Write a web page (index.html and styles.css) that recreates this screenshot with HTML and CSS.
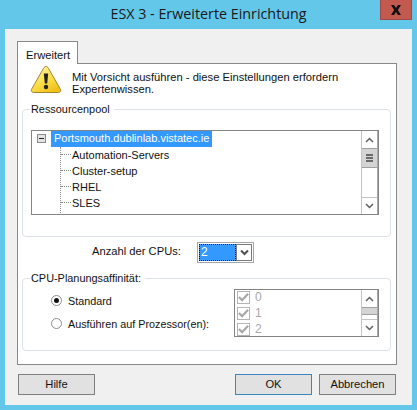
FILE: index.html
```html
<!DOCTYPE html>
<html lang="de">
<head>
    <meta charset="UTF-8">
    <title>ESX 3 - Erweiterte Einrichtung</title>
    <link rel="stylesheet" href="styles.css">
</head>
<body>
    <div class="window">
        <div class="titlebar">
            <span class="title">ESX 3 - Erweiterte Einrichtung</span>
            <div class="close">
                <svg width="12" height="10" viewBox="0 0 12 10"><path d="M1 0h3l2 3 2-3h3L7.8 5 11 10H8L6 7l-2 3H1l3.200-5z" fill="#111"/></svg>
            </div>
        </div>
        <div class="client">
            <div class="tab">Erweitert</div>
            <div class="panel">
                <div class="warning">
                    <svg class="warn-icon" width="32" height="29" viewBox="0 0 32 29">
                        <defs>
                            <linearGradient id="warnfill" x1="0" y1="0" x2="0.6" y2="1">
                                <stop offset="0" stop-color="#fff6b0"/>
                                <stop offset="0.6" stop-color="#fbe04a"/>
                                <stop offset="1" stop-color="#f2c21c"/>
                            </linearGradient>
                        </defs>
                        <path d="M16 1.500c1 0 1.800.6 2.400 1.700l12 21c.8 1.500 0 3.300-1.900 3.300H3.500c-1.900 0-2.700-1.800-1.900-3.300l12-21C14.200 2.100 15 1.500 16 1.500z" fill="url(#warnfill)" stroke="#a5843a"/>
                        <path d="M13.800 8.500h4.400l-1 10h-2.400z" fill="#222"/>
                        <circle cx="16" cy="22" r="2.200" fill="#222"/>
                    </svg>
                    <p class="warning-text">Mit Vorsicht ausführen - diese Einstellungen erfordern Expertenwissen.</p>
                </div>

                <fieldset class="group group-pool">
                    <legend>Ressourcenpool</legend>
                    <div class="listbox tree-box">
                        <div class="tree">
                            <div class="tree-root">
                                <span class="expander"></span>
                                <span class="selected">Portsmouth.dublinlab.vistatec.ie</span>
                            </div>
                            <ul class="tree-children">
                                <li>Automation-Servers</li>
                                <li>Cluster-setup</li>
                                <li>RHEL</li>
                                <li>SLES</li>
                            </ul>
                        </div>
                        <div class="scrollbar">
                            <div class="sb-btn">
                                <svg width="9" height="6" viewBox="0 0 9 6"><path d="M1 5l3.500-3.500L8 5" fill="none" stroke="#606060" stroke-width="1.500"/></svg>
                            </div>
                            <div class="sb-thumb">
                                <span></span><span></span><span></span>
                            </div>
                            <div class="sb-track"></div>
                            <div class="sb-btn">
                                <svg width="9" height="6" viewBox="0 0 9 6"><path d="M1 1l3.500 3.500L8 1" fill="none" stroke="#606060" stroke-width="1.500"/></svg>
                            </div>
                        </div>
                    </div>
                </fieldset>

                <div class="cpu-row">
                    <label class="cpu-label">Anzahl der CPUs:</label>
                    <div class="combo">
                        <div class="combo-value"><span>2</span></div>
                        <div class="combo-arrow">
                            <svg width="9" height="7" viewBox="0 0 9 7"><path d="M1 1.500l3.500 3.500L8 1.500" fill="none" stroke="#505050" stroke-width="2"/></svg>
                        </div>
                    </div>
                </div>

                <fieldset class="group group-cpu">
                    <legend>CPU-Planungsaffinität:</legend>
                    <div class="affinity">
                        <div class="radios">
                            <div class="radio-row">
                                <span class="radio checked"></span>
                                <span>Standard</span>
                            </div>
                            <div class="radio-row">
                                <span class="radio"></span>
                                <span>Ausführen auf Prozessor(en):</span>
                            </div>
                        </div>
                        <div class="listbox cpu-list">
                            <ul class="checks">
                                <li><span class="check"><svg width="12" height="10" viewBox="0 0 12 10"><path d="M1 5l3.500 3.500L11 1.500" fill="none" stroke="#a8a8a8" stroke-width="2.500"/></svg></span>0</li>
                                <li><span class="check"><svg width="12" height="10" viewBox="0 0 12 10"><path d="M1 5l3.500 3.500L11 1.500" fill="none" stroke="#a8a8a8" stroke-width="2.500"/></svg></span>1</li>
                                <li><span class="check"><svg width="12" height="10" viewBox="0 0 12 10"><path d="M1 5l3.500 3.500L11 1.500" fill="none" stroke="#a8a8a8" stroke-width="2.500"/></svg></span>2</li>
                            </ul>
                            <div class="scrollbar">
                                <div class="sb-btn">
                                    <svg width="9" height="6" viewBox="0 0 9 6"><path d="M1 5l3.500-3.500L8 5" fill="none" stroke="#606060" stroke-width="1.500"/></svg>
                                </div>
                                <div class="sb-thumb small"></div>
                                <div class="sb-track"></div>
                                <div class="sb-btn">
                                    <svg width="9" height="6" viewBox="0 0 9 6"><path d="M1 1l3.500 3.500L8 1" fill="none" stroke="#606060" stroke-width="1.500"/></svg>
                                </div>
                            </div>
                        </div>
                    </div>
                </fieldset>
            </div>
            <div class="buttons">
                <div class="btn">Hilfe</div>
                <div class="btn-right">
                    <div class="btn default">OK</div>
                    <div class="btn">Abbrechen</div>
                </div>
            </div>
        </div>
    </div>
</body>
</html>
```

FILE: styles.css
```css
html, body {
    margin: 0;
    padding: 0;
}
body {
    width: 417px;
    height: 410px;
    overflow: hidden;
    background-color: #63c7ea;
    font-family: "Liberation Sans", Arial, sans-serif;
    font-size: 11.200px;
    color: #111;
}
ul {
    list-style: none;
    margin: 0;
    padding: 0;
}

/* title bar */
.window {
    position: relative;
    height: 410px;
    display: flex;
    flex-direction: column;
}
.titlebar {
    height: 29px;
    display: flex;
    align-items: center;
    justify-content: center;
}
.title {
    font-family: "Open Sans", sans-serif;
    font-size: 14.300px;
    color: #1a1a1a;
    margin-top: -2px;
}
.close {
    position: absolute;
    top: 0;
    right: 5px;
    width: 32px;
    height: 20px;
    box-sizing: border-box;
    border: 1px solid #9c4a43;
    border-top: 0;
    background-color: #c35a50;
    display: flex;
    align-items: center;
    justify-content: center;
}

/* dialog body */
.client {
    height: 376px;
    margin: 0 5px;
    box-sizing: border-box;
    padding: 12px 15px 0 12px;
    background-color: #f0f0f0;
}
.tab {
    width: 61px;
    height: 23px;
    box-sizing: border-box;
    border: 1px solid #898989;
    border-bottom: 0;
    background-color: #fff;
    padding: 6px 0 0 8px;
    line-height: 14px;
    margin-bottom: -1px;
    position: relative;
}
.panel {
    height: 302px;
    box-sizing: border-box;
    border: 1px solid #898989;
    background-color: #fff;
    padding: 1px 5px 0 4px;
}
.warning {
    display: flex;
    height: 33px;
}
.warn-icon {
    margin-left: 8px;
    flex: none;
}
.warning-text {
    margin: 6px 0 0 10px;
    width: 285px;
    line-height: 12px;
}

/* group boxes */
.group {
    margin: 0;
    padding: 0;
    border: 1px solid #dce2e8;
    border-radius: 4px;
    min-width: 0;
}
.group legend {
    margin-left: -1px;
    padding: 0 4px 0 1px;
    line-height: 14px;
    font-size: 10.900px;
}
.group-pool {
    margin-top: 4px;
    height: 135px;
    box-sizing: border-box;
    padding: 14px 11px 0 8px;
}
.group-cpu {
    height: 80px;
    box-sizing: border-box;
    padding: 2px 11px 0 8px;
}

/* list boxes and scrollbars */
.listbox {
    display: flex;
    border: 1px solid #848484;
    background-color: #fff;
    box-sizing: border-box;
}
.tree-box {
    height: 85px;
}
.tree {
    flex: 1;
    padding-left: 5px;
    overflow: hidden;
    font-size: 11px;
}
.tree-root {
    display: flex;
    align-items: center;
    height: 17px;
    margin-top: -1px;
}
.expander {
    position: relative;
    width: 7px;
    height: 7px;
    border: 1px solid #8a8a8a;
    background-color: #e4e4e4;
    margin-right: 5px;
}
.expander::after {
    content: "";
    position: absolute;
    left: 1px;
    right: 1px;
    top: 3px;
    height: 1px;
    background-color: #222;
}
.selected {
    background-color: #3399ff;
    color: #fff;
    height: 17px;
    line-height: 17px;
    padding: 0 3px 0 3px;
}
.tree-children {
    margin-left: 23px;
    border-left: 1px dotted #8a8a8a;
    height: 68px;
}
.tree-children li {
    height: 16px;
    line-height: 16px;
    padding-left: 11px;
    position: relative;
}
.tree-children li::before {
    content: "";
    position: absolute;
    left: 0;
    top: 7px;
    width: 10px;
    border-top: 1px dotted #8a8a8a;
}
.scrollbar {
    width: 17px;
    flex: none;
    display: flex;
    flex-direction: column;
    border-left: 1px solid #c4c4c4;
    border-right: 1px solid #a8a8a8;
    box-sizing: border-box;
}
.sb-btn {
    height: 17px;
    display: flex;
    align-items: center;
    justify-content: center;
    flex: none;
}
.sb-btn:last-child {
    height: 16px;
}
.sb-thumb {
    height: 20px;
    flex: none;
    background-color: #d4d4d4;
    border-top: 1px solid #a0a0a0;
    border-bottom: 1px solid #a0a0a0;
    display: flex;
    flex-direction: column;
    align-items: center;
    justify-content: center;
    gap: 1px;
    box-sizing: border-box;
}
.sb-thumb span {
    width: 7px;
    height: 2px;
    background-color: #6a6a6a;
}
.sb-thumb.small {
    height: 8px;
}
.sb-track {
    flex: 1;
    border-bottom: 1px solid #c4c4c4;
}

/* cpu count */
.cpu-row {
    display: flex;
    align-items: flex-start;
    height: 34px;
    padding-top: 5px;
    box-sizing: border-box;
}
.cpu-label {
    margin: 3px 0 0 70px;
    width: 105px;
}
.combo {
    display: flex;
    width: 57px;
    height: 21px;
    box-sizing: border-box;
    border: 1px solid #a5a5a5;
    padding: 1px;
    background-color: #fff;
}
.combo-value {
    flex: 1;
    background-color: #3399ff;
    border: 1px dotted #111;
    color: #fff;
    font-size: 12px;
    line-height: 15px;
    padding-left: 1px;
}
.combo-arrow {
    width: 16px;
    display: flex;
    align-items: center;
    justify-content: center;
    border: 1px solid #7a7a7a;
    box-sizing: border-box;
}

/* cpu affinity */
.affinity {
    display: flex;
    justify-content: space-between;
}
.radios {
    padding: 2px 0 0 20px;
    font-size: 10.800px;
}
.radio-row {
    display: flex;
    align-items: center;
    gap: 6px;
    height: 23px;
}
.radio {
    position: relative;
    flex: none;
    width: 9px;
    height: 9px;
    border: 1px solid #8e8e8e;
    border-radius: 50%;
    background-color: #fff;
}
.radio.checked::after {
    content: "";
    position: absolute;
    left: 2px;
    top: 2px;
    width: 5px;
    height: 5px;
    border-radius: 50%;
    background-color: #111;
}
.cpu-list {
    width: 145px;
    height: 48px;
    margin-top: 2px;
}
.checks {
    flex: 1;
    overflow: hidden;
    margin-top: -1px;
    padding-left: 2px;
}
.checks li {
    display: flex;
    align-items: center;
    gap: 5px;
    height: 16px;
    color: #a8a8a8;
    font-size: 12px;
}
.check {
    width: 11px;
    height: 11px;
    border: 1px solid #b4b4b4;
    display: flex;
    align-items: center;
    justify-content: center;
}

/* bottom buttons */
.buttons {
    display: flex;
    justify-content: space-between;
    padding: 9px 1px 0 1px;
}
.btn-right {
    display: flex;
    gap: 7px;
}
.btn {
    width: 77px;
    height: 21px;
    box-sizing: border-box;
    border: 1px solid #7f7f7f;
    background-color: #e1e1e1;
    text-align: center;
    line-height: 19px;
}
.btn.default {
    border-color: #3a86bd;
}
```
